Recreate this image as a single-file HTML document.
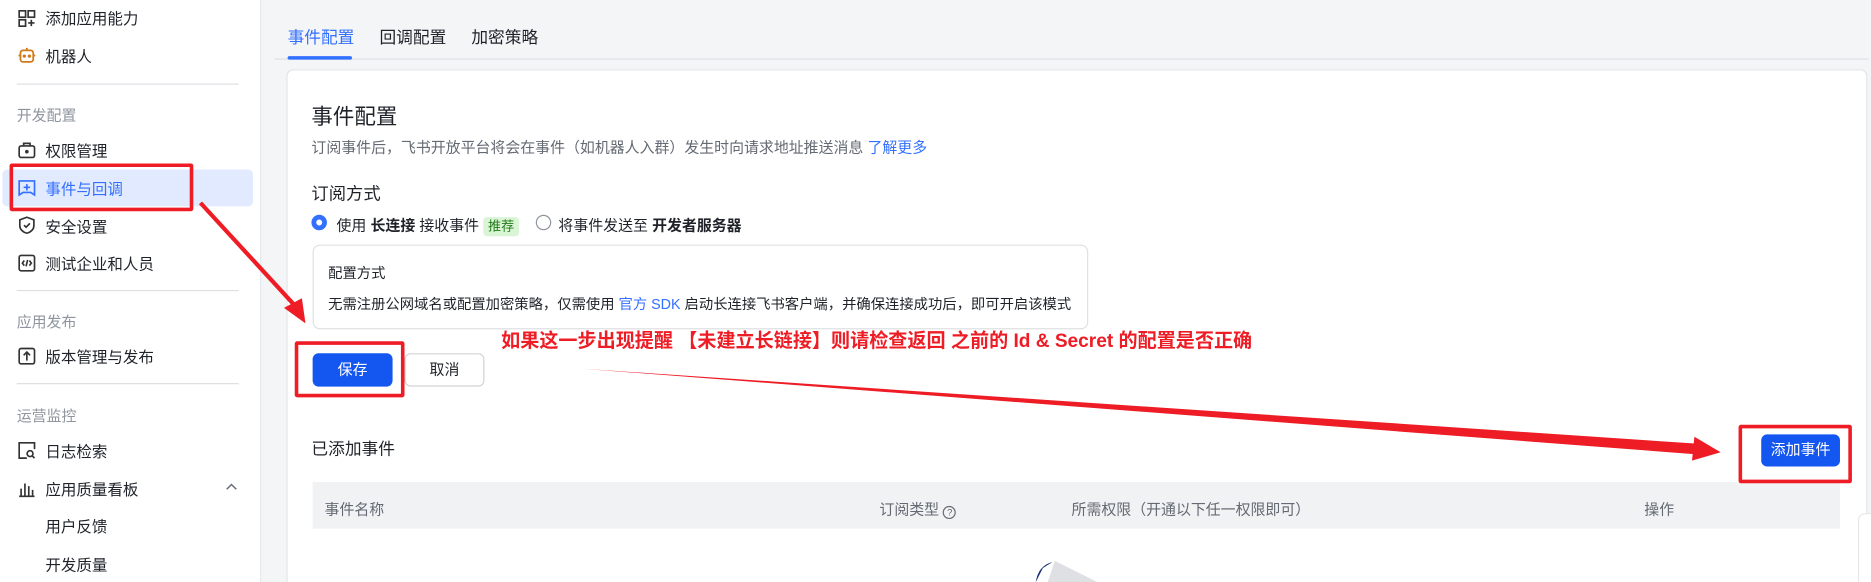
<!DOCTYPE html>
<html><head><meta charset="utf-8"><style>
*{margin:0;padding:0;box-sizing:border-box}
html,body{width:1871px;height:582px;overflow:hidden;background:#f4f5f7}
body{font-family:"Liberation Sans","Noto Sans CJK SC",sans-serif;color:#1f2329}
#w{position:absolute;left:0;top:0;width:1568px;height:488px;overflow:hidden;transform:scale(1.19324);transform-origin:0 0;background:#f4f5f7}
.a{position:absolute;white-space:nowrap}
#side{position:absolute;left:0;top:0;width:219px;height:488px;background:#fff;border-right:1px solid #e4e6e9}
.it{position:absolute;left:38px;font-size:13px;color:#1f2329}
.si{position:absolute;left:15px}
.gr{position:absolute;left:14px;font-size:12.5px;color:#8f959e}
.dv{position:absolute;left:14px;width:186px;height:1px;background:#dee0e3}
.card{position:absolute;left:240px;top:58px;width:1325px;height:430px;background:#fff;border:1px solid #e1e3e6;border-bottom:none;border-radius:6px 6px 0 0}
.rb{position:absolute;border:3px solid #ee1c25;border-radius:2px}
</style></head><body><div id="w">
<div id="side">
<svg class="si" style="top:8px" width="15" height="15" viewBox="0 0 14 14" fill="none" stroke="#333" stroke-width="1.3"><rect x="1" y="1" width="5" height="5"/><rect x="8" y="1" width="5" height="5"/><rect x="1" y="8" width="5" height="5"/><path d="M10.5 8v5M8 10.5h5"/></svg>
<div class="it" style="top:5px">添加应用能力</div>
<svg class="si" style="top:39px" width="15" height="15" viewBox="0 0 14 14" fill="none" stroke="#d07a1a" stroke-width="1.4"><rect x="2" y="3" width="10" height="9" rx="2"/><path d="M7 1v2M0.5 7h1.5M12 7h1.5"/><circle cx="5" cy="7.5" r=".6" fill="#d07a1a"/><circle cx="9" cy="7.5" r=".6" fill="#d07a1a"/></svg>
<div class="it" style="top:37px">机器人</div>
<div class="dv" style="top:70px"></div>
<div class="gr" style="top:86px">开发配置</div>
<svg class="si" style="top:118px" width="15" height="15" viewBox="0 0 14 14" fill="none" stroke="#333" stroke-width="1.3"><rect x="1" y="4" width="12" height="9" rx="1.5"/><path d="M4.5 4V2h5v2"/><circle cx="7" cy="8.5" r=".8" fill="#333"/></svg>
<div class="it" style="top:116px">权限管理</div>
<div class="a" style="left:2px;top:142px;width:210px;height:31px;background:#e1eaff;border-radius:4px"></div>
<svg class="si" style="top:150px" width="15" height="15" viewBox="0 0 14 14" fill="none" stroke="#3370ff" stroke-width="1.3"><path d="M1 1.5h12v11l-3-2H4l-3 2z"/><path d="M7 4v5M4.5 6.5h5"/></svg>
<div class="it" style="top:148px;color:#3370ff">事件与回调</div>
<svg class="si" style="top:181px" width="15" height="15" viewBox="0 0 14 14" fill="none" stroke="#333" stroke-width="1.3"><path d="M7 1l5.5 2v4.5c0 3-2.5 5-5.5 6-3-1-5.5-3-5.5-6V3z"/><path d="M4.8 7.2l1.6 1.6 3-3"/></svg>
<div class="it" style="top:180px">安全设置</div>
<svg class="si" style="top:213px" width="15" height="15" viewBox="0 0 14 14" fill="none" stroke="#333" stroke-width="1.3"><rect x="1" y="1" width="12" height="12" rx="1.5"/><path d="M5 5L3.5 7 5 9M9 5l1.5 2L9 9M7.6 4.5l-1.2 5"/></svg>
<div class="it" style="top:211px">测试企业和人员</div>
<div class="dv" style="top:243px"></div>
<div class="gr" style="top:259px">应用发布</div>
<svg class="si" style="top:291px" width="15" height="15" viewBox="0 0 14 14" fill="none" stroke="#333" stroke-width="1.3"><rect x="1" y="1" width="12" height="12" rx="1.5"/><path d="M7 10.5V4M4.5 6.3L7 3.8l2.5 2.5"/></svg>
<div class="it" style="top:289px">版本管理与发布</div>
<div class="dv" style="top:321px"></div>
<div class="gr" style="top:338px">运营监控</div>
<svg class="si" style="top:370px" width="15" height="15" viewBox="0 0 14 14" fill="none" stroke="#333" stroke-width="1.3"><path d="M13 6V1H1v12h6"/><circle cx="9.5" cy="9.5" r="2.3"/><path d="M11.2 11.2l1.8 1.8"/></svg>
<div class="it" style="top:368px">日志检索</div>
<svg class="si" style="top:402px" width="15" height="15" viewBox="0 0 14 14" fill="none" stroke="#333" stroke-width="1.3"><path d="M1 13h12M2.5 13V7M5.5 13V3M8.5 13V5M11.5 13V8"/></svg>
<div class="it" style="top:400px">应用质量看板</div>
<svg class="a" style="left:189px;top:405px" width="10" height="6" viewBox="0 0 10 6" fill="none" stroke="#646a73" stroke-width="1.2"><path d="M1 5l4-4 4 4"/></svg>
<div class="it" style="top:431px">用户反馈</div>
<div class="it" style="top:463px">开发质量</div>
</div>
<div class="a" style="left:241px;top:21px;font-size:14px;color:#3370ff">事件配置</div>
<div class="a" style="left:318px;top:21px;font-size:14px">回调配置</div>
<div class="a" style="left:395px;top:21px;font-size:14px">加密策略</div>
<div class="a" style="left:230px;top:49px;width:1336px;height:1px;background:#dee0e3"></div>
<div class="a" style="left:241px;top:47px;width:54px;height:3px;background:#3370ff;border-radius:2px"></div>
<div class="card"></div>
<div class="a" style="left:261px;top:84px;font-size:18px">事件配置</div>
<div class="a" style="left:261px;top:113px;font-size:12.5px;color:#646a73">订阅事件后，飞书开放平台将会在事件（如机器人入群）发生时向请求地址推送消息 <span style="color:#3370ff">了解更多</span></div>
<div class="a" style="left:261px;top:151px;font-size:14.5px">订阅方式</div>
<div class="a" style="left:261px;top:180px;width:13px;height:13px;border:4px solid #3370ff;border-radius:50%"></div>
<div class="a" style="left:282px;top:178px;font-size:12.5px">使用 <b>长连接</b> 接收事件 <span style="background:#d9f5d6;color:#237b19;font-size:11px;padding:2px 4px;border-radius:3px">推荐</span></div>
<div class="a" style="left:449px;top:180px;width:13px;height:13px;border:1px solid #8f959e;border-radius:50%"></div>
<div class="a" style="left:468px;top:178px;font-size:12.5px">将事件发送至 <b>开发者服务器</b></div>
<div class="a" style="left:262px;top:205px;width:650px;height:71px;border:1px solid #dee0e3;border-radius:6px"></div>
<div class="a" style="left:275px;top:220px;font-size:12px">配置方式</div>
<div class="a" style="left:275px;top:246px;font-size:12px">无需注册公网域名或配置加密策略，仅需使用 <span style="color:#3370ff">官方 SDK</span> 启动长连接飞书客户端，并确保连接成功后，即可开启该模式</div>
<div class="a" style="left:262px;top:296px;width:67px;height:28px;background:#1456f0;border-radius:5px;color:#fff;font-size:12.5px;text-align:center;line-height:28px">保存</div>
<div class="a" style="left:339px;top:296px;width:67px;height:28px;border:1px solid #d0d3d6;border-radius:5px;font-size:12.5px;text-align:center;line-height:26px">取消</div>
<div class="a" style="left:420px;top:272px;font-size:16px;font-weight:bold;color:#ee1c25">如果这一步出现提醒 【未建立长链接】则请检查返回 之前的 Id &amp; Secret 的配置是否正确</div>
<div class="a" style="left:261px;top:366px;font-size:14px">已添加事件</div>
<div class="a" style="left:1476px;top:364px;width:66px;height:27px;background:#1456f0;border-radius:5px;color:#fff;font-size:12.5px;text-align:center;line-height:27px">添加事件</div>
<div class="a" style="left:262px;top:404px;width:1280px;height:39px;background:#f1f2f4"></div>
<div class="a" style="left:272px;top:416px;font-size:12.5px;color:#646a73">事件名称</div>
<div class="a" style="left:737px;top:416px;font-size:12.5px;color:#646a73">订阅类型 <span style="display:inline-block;width:11px;height:11px;border:1px solid #646a73;border-radius:50%;font-size:8px;line-height:9px;text-align:center;vertical-align:-1px">?</span></div>
<div class="a" style="left:898px;top:416px;font-size:12.5px;color:#646a73">所需权限（开通以下任一权限即可）</div>
<div class="a" style="left:1378px;top:416px;font-size:12.5px;color:#646a73">操作</div>
<svg class="a" style="left:860px;top:468px" width="70" height="20"><path d="M8 20 Q10 6 22 3 L14 8 Z" fill="#1b2f7a"/><path d="M24 2 L60 20 L18 20 Z" fill="#dfe0e3"/></svg>
<div class="a" style="left:1557px;top:430px;width:11px;height:58px;background:#fff;border:1px solid #e4e6e9;border-right:none;border-bottom:none;border-radius:6px 0 0 0"></div>
<div class="rb" style="left:8px;top:137px;width:154px;height:40px"></div>
<div class="rb" style="left:247px;top:286px;width:92px;height:47px"></div>
<div class="rb" style="left:1457px;top:356px;width:95px;height:49px"></div>
<svg class="a" style="left:0;top:0" width="1568" height="488">
<path d="M168 170 L247 256" stroke="#ee1c25" stroke-width="3.5"/>
<path d="M238 258 L256 271 L253 250 Z" fill="#ee1c25"/>
<path d="M488 309 L1425 372 L1425 381 Z" fill="#ee1c25"/>
<path d="M1420 366 L1442 379 L1418 386 Z" fill="#ee1c25"/>
</svg>
</div></body></html>
